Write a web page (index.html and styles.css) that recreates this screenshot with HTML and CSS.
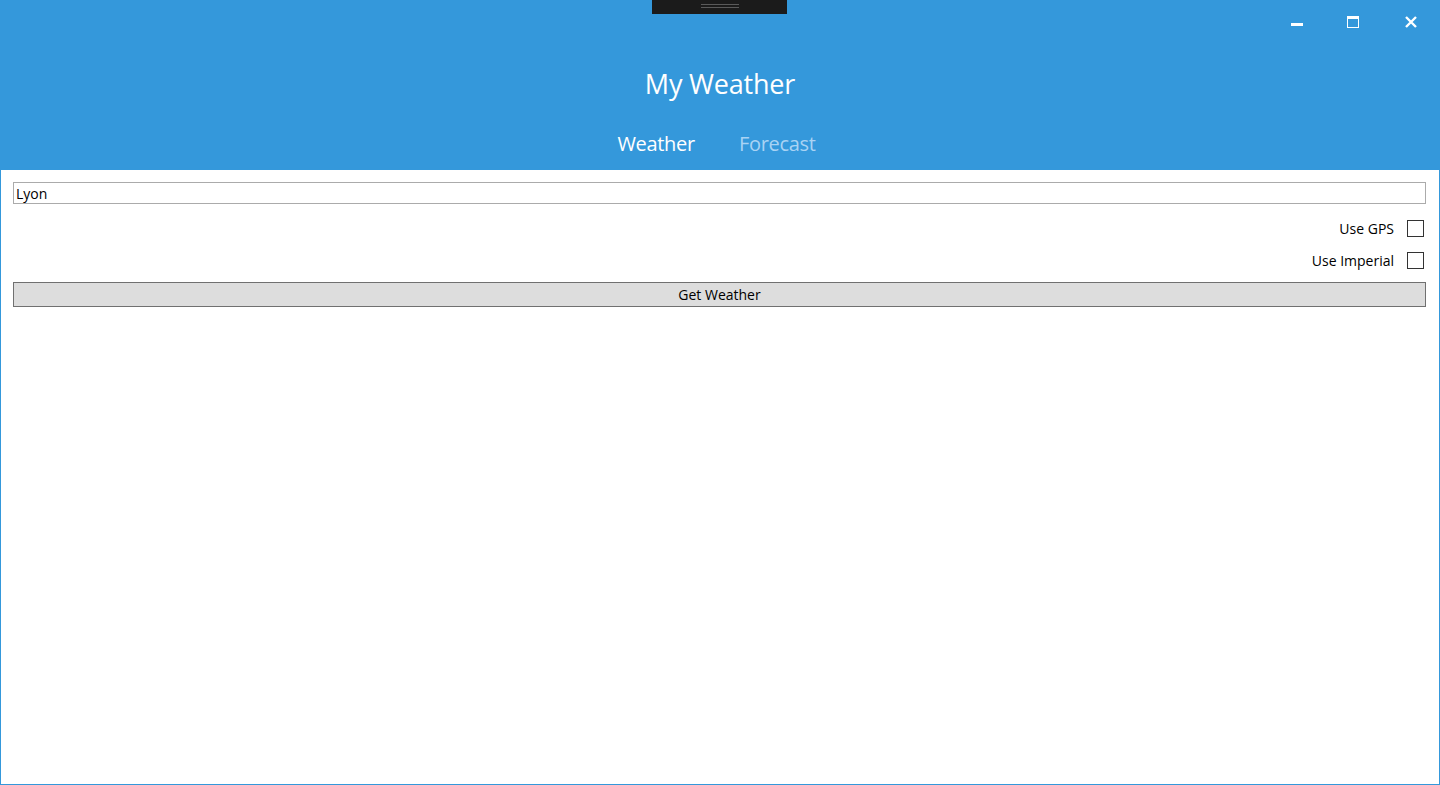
FILE: index.html
```html
<!DOCTYPE html>
<html>
<head>
<meta charset="utf-8">
<link rel="stylesheet" href="styles.css">
</head>
<body>
<div class="window">
  <header class="header">
    <div class="grip"><span class="grip-line"></span></div>
    <div class="controls">
      <button class="ctl" aria-label="Minimize"><svg width="12" height="12" viewBox="0 0 12 12"><rect x="0" y="7" width="12" height="3" fill="#fff"/></svg></button>
      <button class="ctl" aria-label="Maximize"><svg width="12" height="12" viewBox="0 0 12 12"><rect x="0.5" y="0.5" width="11" height="11" fill="none" stroke="#fff"/><rect x="0" y="0" width="12" height="3" fill="#fff"/></svg></button>
      <button class="ctl" aria-label="Close"><svg width="12" height="12" viewBox="0 0 12 12"><path d="M1 1 L11 11 M11 1 L1 11" stroke="#fff" stroke-width="2.4"/></svg></button>
    </div>
    <h1 class="title">My Weather</h1>
    <nav class="tabs">
      <span class="tab active">Weather</span>
      <span class="tab">Forecast</span>
    </nav>
  </header>
  <main class="content">
    <input class="city" type="text" value="Lyon">
    <label class="option"><span>Use GPS</span><span class="box"></span></label>
    <label class="option"><span>Use Imperial</span><span class="box"></span></label>
    <button class="get">Get Weather</button>
  </main>
</div>
</body>
</html>
```
FILE: styles.css
```css
* { box-sizing: border-box; }
html, body { margin: 0; padding: 0; }
body { width: 1440px; height: 785px; overflow: hidden; font-family: "Open Sans", "Noto Sans", sans-serif; background: #fff; }
.window {
  width: 1440px; height: 785px;
  border: 1px solid #3498db; border-top: none;
  display: flex; flex-direction: column;
}
.header {
  position: relative;
  height: 170px;
  background: #3498db;
  margin: 0 -1px;
  display: flex; flex-direction: column; align-items: center;
}
.grip {
  position: absolute; left: 652px; top: 0;
  width: 135px; height: 14px; background: #1b1b1b;
  display: flex; justify-content: center;
}
.grip-line {
  margin-top: 4px; width: 38px; height: 4px;
  border-top: 1px solid #5a5a5a; border-bottom: 1px solid #5a5a5a;
}
.controls {
  position: absolute; right: 0; top: 0;
  display: flex;
}
.ctl {
  width: 56px; height: 46px; border: none; background: transparent; padding: 0;
  display: flex; align-items: center; justify-content: center; padding-bottom: 2px;
}
.ctl:last-child { width: 59px; }
.title {
  margin: 66px 0 0; font-weight: 400; font-size: 27px; line-height: 36px;
  color: #fff; letter-spacing: -0.2px;
}
.tabs { display: flex; gap: 44px; margin-top: 29px; margin-right: 7px; }
.tab { font-size: 20px; line-height: 26px; color: #a9d3f4; letter-spacing: -0.3px; font-weight: 500; }
.tab.active { color: #fff; }
.content {
  flex: 1; padding: 12px 13px 0 12px;
  display: flex; flex-direction: column; align-items: stretch;
}
.city {
  height: 22px; border: 1px solid #ababab; padding: 0 2px;
  font: 14px "Open Sans", sans-serif; color: #000; outline: none;
}
.option {
  display: flex; justify-content: flex-end; align-items: center; gap: 13px;
  height: 32px; font-size: 14px; color: #000; padding-right: 2px;
}
.option:first-of-type { margin-top: 8px; }
.box { width: 17px; height: 17px; border: 1px solid #333; background: #fff; }
.get {
  margin-top: 6px; height: 25px; background: #dddddd; border: 1px solid #707070;
  font: 14px "Open Sans", sans-serif; color: #000; padding: 0;
}
```
